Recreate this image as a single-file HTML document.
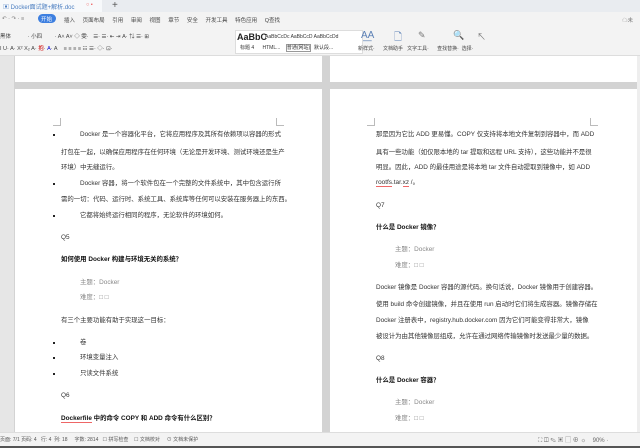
<!DOCTYPE html>
<html><head><meta charset="utf-8"><style>
*{margin:0;padding:0;box-sizing:border-box}
body{width:640px;height:448px;overflow:hidden;background:#cfcfcf;font-family:"Liberation Sans","Noto Sans CJK SC",sans-serif;position:relative;color:#333}
.a{position:absolute;white-space:nowrap}
.t{font-size:6.4px;line-height:8px;color:#333}
.b{font-weight:bold;color:#111}
.g{color:#888}
.dot{position:absolute;width:2px;height:2px;background:#222}
.s{font-size:5.5px;color:#444}
</style></head><body>
<!-- title bar -->
<div class="a" style="left:0;top:0;width:640px;height:12px;background:#e9ecf0"></div>
<div class="a" style="left:0;top:0;width:102px;height:12px;background:#f7f9fb"></div>
<div class="a s" style="left:3px;top:2px;color:#4a7dc0;font-size:6px">▣ Docker面试题+解析.doc</div>
<div class="a s" style="left:86px;top:2px;color:#e66">○ ▪</div>
<div class="a" style="left:112px;top:0px;font-size:10px;color:#555">+</div>
<!-- menu row -->
<div class="a" style="left:0;top:12px;width:640px;height:44px;background:#f3f3f3;border-bottom:1px solid #ddd"></div>
<div class="a s" style="left:2px;top:16px;color:#777">↶ · ↷ · ≡</div>
<div class="a" style="left:38px;top:14px;width:18px;height:9px;background:#3d7fe0;border-radius:5px"></div>
<div class="a s" style="left:41px;top:15px;color:#fff">开始</div>
<div class="a s" style="left:64px;top:16px">插入&nbsp;&nbsp;&nbsp;&nbsp;&nbsp;页面布局&nbsp;&nbsp;&nbsp;&nbsp;&nbsp;引用&nbsp;&nbsp;&nbsp;&nbsp;&nbsp;审阅&nbsp;&nbsp;&nbsp;&nbsp;&nbsp;视图&nbsp;&nbsp;&nbsp;&nbsp;&nbsp;章节&nbsp;&nbsp;&nbsp;&nbsp;&nbsp;安全&nbsp;&nbsp;&nbsp;&nbsp;&nbsp;开发工具&nbsp;&nbsp;&nbsp;&nbsp;&nbsp;特色应用&nbsp;&nbsp;&nbsp;&nbsp;&nbsp;Q查找</div>
<div class="a s" style="left:622px;top:16px;color:#777">☁未</div>
<!-- ribbon row 1 -->
<div class="a s" style="left:0;top:32px">黑体&nbsp;&nbsp;&nbsp;&nbsp;&nbsp;&nbsp;&nbsp;&nbsp;&nbsp;&nbsp;&nbsp;· 小四&nbsp;&nbsp;&nbsp;&nbsp;&nbsp;&nbsp;&nbsp;&nbsp;· A˄ A˅ ◇ 雯·&nbsp;&nbsp;&nbsp;☰· ☰· ⇤ ⇥ A· ⇅ ☰· ⊞</div>
<div class="a s" style="left:0;top:44px">I U· A· X² X₂ A· <span style="color:#c00">抱</span>· <span style="color:#00c">A</span>· A&nbsp;&nbsp;&nbsp;&nbsp;≡ ≡ ≡ ≡ ☷ ☰· ◇· ⊡·</div>
<div class="a" style="left:235px;top:30px;width:128px;height:24px;background:#fff;border:1px solid #ddd"></div>
<div class="a" style="left:237px;top:32px;font-size:9px;font-weight:bold;color:#222">AaBbC</div>
<div class="a" style="left:265px;top:34px;font-size:5px;color:#333">AaBbCcDc AaBbCcD AaBbCcDd</div>
<div class="a" style="left:240px;top:44px;font-size:5px;color:#333">标题 4&nbsp;&nbsp;&nbsp;&nbsp;&nbsp;&nbsp;HTML...&nbsp;&nbsp;&nbsp;&nbsp;<span style="border:1px solid #999">普通(网站)</span>&nbsp;&nbsp;默认段...</div>
<div class="a" style="left:361px;top:30px;font-size:10px;color:#5a7fb5">A͟A</div>
<div class="a" style="left:394px;top:30px;font-size:10px;color:#5a7fb5">🗋</div>
<div class="a" style="left:418px;top:30px;font-size:9px;color:#777">✎</div>
<div class="a" style="left:453px;top:30px;font-size:9px;color:#4a8ad0">🔍</div>
<div class="a" style="left:477px;top:30px;font-size:9px;color:#777">↖</div>
<div class="a" style="left:358px;top:45px;font-size:5px;color:#444">新样式·&nbsp;&nbsp;&nbsp;&nbsp;&nbsp;&nbsp;文档助手&nbsp;&nbsp;&nbsp;文字工具·&nbsp;&nbsp;&nbsp;&nbsp;&nbsp;&nbsp;查找替换·&nbsp;&nbsp;选择·</div>
<!-- doc area -->
<div class="a" style="left:0;top:56px;width:640px;height:376px;background:#d3d3d3"></div>
<div class="a" style="left:0;top:56px;width:14px;height:376px;background:#e6e6e6"></div>
<div class="a" style="left:15px;top:56px;width:307px;height:26px;background:#fff"></div>
<div class="a" style="left:330px;top:56px;width:307px;height:26px;background:#fff"></div>
<div class="a" style="left:15px;top:89px;width:307px;height:343px;background:#fff"></div>
<div class="a" style="left:330px;top:89px;width:307px;height:343px;background:#fff"></div>
<!-- corner marks -->
<div class="a" style="left:53px;top:118px;width:8px;height:8px;border-right:1px solid #bbb;border-bottom:1px solid #bbb"></div>
<div class="a" style="left:276px;top:118px;width:8px;height:8px;border-left:1px solid #bbb;border-bottom:1px solid #bbb"></div>
<div class="a" style="left:367px;top:118px;width:8px;height:8px;border-right:1px solid #bbb;border-bottom:1px solid #bbb"></div>
<div class="a" style="left:590px;top:118px;width:8px;height:8px;border-left:1px solid #bbb;border-bottom:1px solid #bbb"></div>
<!-- left page text -->
<div class="dot" style="left:53px;top:134px"></div>
<div class="a t" style="left:80px;top:131px">Docker 是一个容器化平台，它将应用程序及其所有依赖项以容器的形式</div>
<div class="a t" style="left:61px;top:149px">打包在一起，以确保应用程序在任何环境（无论是开发环境、测试环境还是生产</div>
<div class="a t" style="left:61px;top:164px">环境）中无缝运行。</div>
<div class="dot" style="left:53px;top:183px"></div>
<div class="a t" style="left:80px;top:180px">Docker 容器，将一个软件包在一个完整的文件系统中，其中包含运行所</div>
<div class="a t" style="left:61px;top:196px">需的一切：代码、运行时、系统工具、系统库等任何可以安装在服务器上的东西。</div>
<div class="dot" style="left:53px;top:215px"></div>
<div class="a t" style="left:80px;top:212px">它都将始终运行相同的程序，无论软件的环境如何。</div>
<div class="a t" style="left:61px;top:234px">Q5</div>
<div class="a t b" style="left:61px;top:256px">如何使用 Docker 构建与环境无关的系统？</div>
<div class="a t g" style="left:80px;top:279px">主题：Docker</div>
<div class="a t g" style="left:80px;top:294px">难度：□ □</div>
<div class="a t" style="left:61px;top:317px">有三个主要功能有助于实现这一目标：</div>
<div class="dot" style="left:53px;top:342px"></div>
<div class="a t" style="left:80px;top:339px">卷</div>
<div class="dot" style="left:53px;top:357px"></div>
<div class="a t" style="left:80px;top:354px">环境变量注入</div>
<div class="dot" style="left:53px;top:373px"></div>
<div class="a t" style="left:80px;top:370px">只读文件系统</div>
<div class="a t" style="left:61px;top:392px">Q6</div>
<div class="a t b" style="left:61px;top:415px"><span style="border-bottom:1px solid #e66">Dockerfile</span> 中的命令 COPY 和 ADD 命令有什么区别？</div>
<!-- right page text -->
<div class="a t" style="left:376px;top:131px">那是因为它比 ADD 更易懂。COPY 仅支持将本地文件复制到容器中，而 ADD</div>
<div class="a t" style="left:376px;top:149px">具有一些功能（如仅限本地的 tar 提取和远程 URL 支持），这些功能并不是很</div>
<div class="a t" style="left:376px;top:164px">明显。因此，ADD 的最佳用途是将本地 tar 文件自动提取到镜像中，如 ADD</div>
<div class="a t" style="left:376px;top:179px"><span style="border-bottom:1px solid #e66">rootfs</span>.tar.<span style="border-bottom:1px solid #e66">xz</span> /。</div>
<div class="a t" style="left:376px;top:202px">Q7</div>
<div class="a t b" style="left:376px;top:224px">什么是 Docker 镜像？</div>
<div class="a t g" style="left:395px;top:246px">主题：Docker</div>
<div class="a t g" style="left:395px;top:262px">难度：□ □</div>
<div class="a t" style="left:376px;top:284px">Docker 镜像是 Docker 容器的源代码。换句话说，Docker 镜像用于创建容器。</div>
<div class="a t" style="left:376px;top:301px">使用 build 命令创建镜像，并且在使用 run 启动时它们将生成容器。镜像存储在</div>
<div class="a t" style="left:376px;top:317px">Docker 注册表中，registry.hub.docker.com 因为它们可能变得非常大，镜像</div>
<div class="a t" style="left:376px;top:333px">被设计为由其他镜像层组成，允许在通过网络传输镜像时发送最少量的数据。</div>
<div class="a t" style="left:376px;top:355px">Q8</div>
<div class="a t b" style="left:376px;top:377px">什么是 Docker 容器？</div>
<div class="a t g" style="left:395px;top:399px">主题：Docker</div>
<div class="a t g" style="left:395px;top:415px">难度：□ □</div>
<!-- scrollbar -->
<div class="a" style="left:637px;top:56px;width:3px;height:376px;background:#eee"></div>
<!-- status bar -->
<div class="a" style="left:0;top:432px;width:640px;height:16px;background:#f3f3f3;border-top:1px solid #ddd"></div>
<div class="a" style="left:0;top:436px;font-size:5px;color:#555">页面: 7/1 页码: 4&nbsp;&nbsp;&nbsp;行: 4&nbsp;&nbsp;列: 18&nbsp;&nbsp;&nbsp;&nbsp;&nbsp;字数: 2814&nbsp;&nbsp;&nbsp;☐ 拼写检查&nbsp;&nbsp;&nbsp;&nbsp;☐ 文档校对&nbsp;&nbsp;&nbsp;&nbsp;&nbsp;⊙ 文档未保护</div>
<div class="a" style="left:538px;top:435px;font-size:6px;color:#666">⛶ ◫ ✎ ▣ ▢ ⊕ ☼&nbsp;&nbsp;&nbsp;&nbsp;90% ·</div>
<div class="a" style="left:0;top:446px;width:640px;height:2px;background:#555"></div>
</body></html>
